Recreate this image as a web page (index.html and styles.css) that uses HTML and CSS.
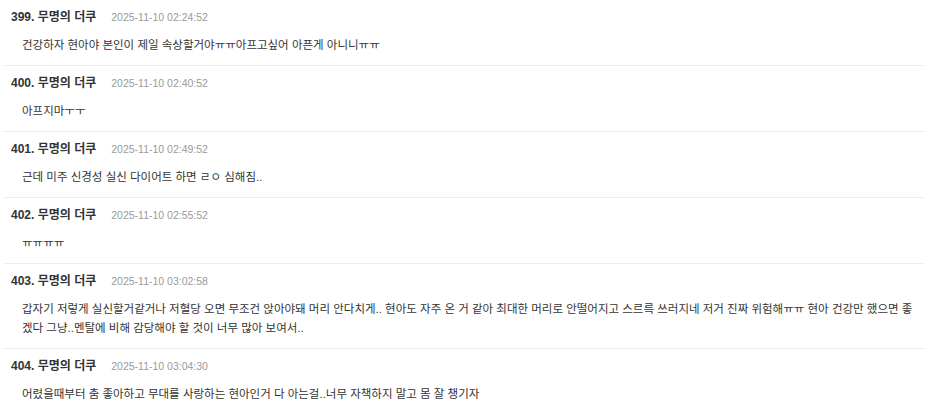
FILE: index.html
```html
<!DOCTYPE html>
<html lang="ko">
<head>
<meta charset="utf-8">
<link rel="stylesheet" href="styles.css">
</head>
<body>
<ul class="list">
  <li class="item">
    <div class="head"><span class="author">399. 무명의 더쿠</span><span class="date">2025-11-10 02:24:52</span></div>
    <p class="body">건강하자 현아야 본인이 제일 속상할거야ㅠㅠ아프고싶어 아픈게 아니니ㅠㅠ</p>
  </li>
  <li class="item">
    <div class="head"><span class="author">400. 무명의 더쿠</span><span class="date">2025-11-10 02:40:52</span></div>
    <p class="body">아프지마ㅜㅜ</p>
  </li>
  <li class="item">
    <div class="head"><span class="author">401. 무명의 더쿠</span><span class="date">2025-11-10 02:49:52</span></div>
    <p class="body">근데 미주 신경성 실신 다이어트 하면 ㄹㅇ 심해짐..</p>
  </li>
  <li class="item">
    <div class="head"><span class="author">402. 무명의 더쿠</span><span class="date">2025-11-10 02:55:52</span></div>
    <p class="body">ㅠㅠㅠㅠ</p>
  </li>
  <li class="item">
    <div class="head"><span class="author">403. 무명의 더쿠</span><span class="date">2025-11-10 03:02:58</span></div>
    <p class="body">갑자기 저렇게 실신할거같거나 저혈당 오면 무조건 앉아야돼 머리 안다치게.. 현아도 자주 온 거 같아 최대한 머리로 안떨어지고 스르륵 쓰러지네 저거 진짜 위험해ㅠㅠ 현아 건강만 했으면 좋겠다 그냥..멘탈에 비해 감당해야 할 것이 너무 많아 보여서..</p>
  </li>
  <li class="item">
    <div class="head"><span class="author">404. 무명의 더쿠</span><span class="date">2025-11-10 03:04:30</span></div>
    <p class="body">어렸을때부터 춤 좋아하고 무대를 사랑하는 현아인거 다 아는걸..너무 자책하지 말고 몸 잘 챙기자</p>
  </li>
</ul>
</body>
</html>
```
FILE: styles.css
```css
html, body {
  margin: 0;
  padding: 0;
  background: #fff;
}
body {
  font-family: "Liberation Sans", "Noto Sans CJK KR", sans-serif;
  color: #333;
}
.list {
  list-style: none;
  margin: 0;
  padding: 0 0 0 3px;
}
.item {
  padding: 10px 12px 10px 8px;
  border-bottom: 1px solid #eeeeee;
}
.head {
  display: flex;
  align-items: center;
  gap: 15px;
  height: 14px;
  line-height: 14px;
}
.author {
  font-size: 12px;
  font-weight: bold;
  color: #333;
}
.date {
  font-size: 10.5px;
  color: #9a9a9a;
}
.body {
  margin: 12px 0 0 11px;
  font-size: 11.5px;
  line-height: 19px;
  color: #333;
  word-break: break-all;
}
```
